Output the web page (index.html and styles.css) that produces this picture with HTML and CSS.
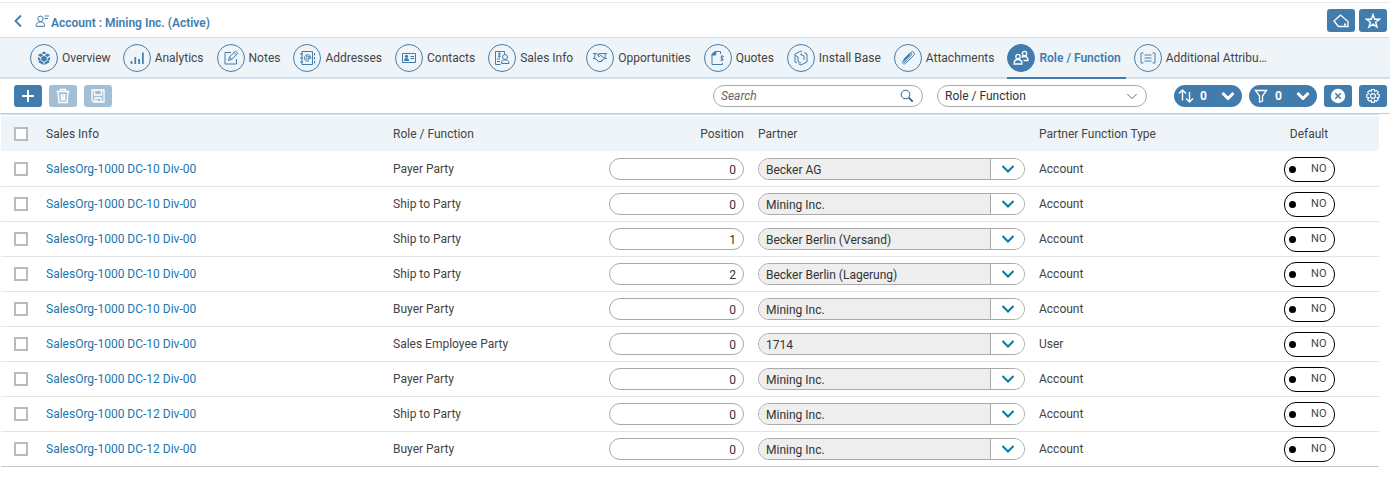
FILE: index.html
```
<!DOCTYPE html>
<html lang="en">
<head>
<meta charset="utf-8">
<title>Account : Mining Inc.</title>
<link rel="stylesheet" href="styles.css">
</head>
<body>
<svg class="sprite" aria-hidden="true">
  <symbol id="chevron" viewBox="0 0 14 8"><path d="M1.500 1l5.500 5.500L12.500 1"/></symbol>
</svg>

<header class="header">
  <button class="back" aria-label="Back"><svg viewBox="0 0 8 14" width="8" height="14"><path d="M7 1.500L1.500 7 7 12.500" stroke-width="1.800"/></svg></button>
  <svg class="account-icon" viewBox="0 0 14 12" width="14" height="12"><circle cx="5.500" cy="3.800" r="2.700"/><path d="M1 11.300c0-3 1.500-4.300 4.500-4.300s4 1.300 4 4.300zM9.500 1H14M9.500 3.500H13"/></svg>
  <h1 class="title">Account : Mining Inc. (Active)</h1>
  <div class="header-actions">
    <button class="btn btn-tall" aria-label="Tag"><svg viewBox="0 0 16 16" width="16" height="16"><path d="M7.500 2L1 8l4.500 5.500H15V8.500z" stroke-width="1.300"/><path d="M11 10.500h2v2h-2z" fill="currentColor" stroke="none"/></svg></button>
    <button class="btn btn-tall" aria-label="Favorite"><svg viewBox="0 0 16 16" width="16" height="16"><path d="M8 1.500l1.600 4.700h5l-4 3 1.500 4.800L8 11.200 3.900 14l1.500-4.800-4-3h5z" stroke-width="1.400"/></svg></button>
  </div>
</header>

<nav class="tabs">
  <a class="tab" href="#"><span class="disc"><svg viewBox="0 0 16 16"><path d="M8 1.500l2.500 1.400L8 4.300 5.500 2.900zM4.500 3.500L7 4.900v.6L4.500 6.900 2.300 5.600v-.8zM11.500 3.500l2.200 1.300v.8l-2.200 1.300L9 5.500v-.6zM8 5.800l2.700 1.500v3L8 11.800l-2.700-1.500v-3zM2 7l2.400 1.400v2.500L2 9.700zM14 7v2.700l-2.400 1.200V8.400zM2.600 11l2.200-.2 2.700 1.600V15L2.600 12.200zM13.400 11l-2.200-.2-2.700 1.600V15l4.900-2.800z" fill="currentColor" stroke="none"/></svg></span>Overview</a>
  <a class="tab" href="#"><span class="disc"><svg viewBox="0 0 16 16"><path d="M2.500 14v-3M6.300 14V7M10.100 14V9M13.900 14V2.500" stroke-width="1.700"/></svg></span>Analytics</a>
  <a class="tab" href="#"><span class="disc"><svg viewBox="0 0 16 16"><path d="M8 2.500H2v11.500h11.500V9M5.500 10.500l1-3.500L12.500 1l2.300 2.300-6 6zM6.500 7l2.300 2.300M11 2.500l2.300 2.300"/></svg></span>Notes</a>
  <a class="tab" href="#"><span class="disc"><svg viewBox="0 0 16 16"><path d="M3 1.500h10.500v13H3zM1 4h3M1 8h3M1 12h3M15.500 3v2.500M15.500 7v2.500M15.500 11v2.500"/><circle cx="8.600" cy="7.800" r="1.500"/><path d="M10.200 6v2.300c0 1 1.600.8 1.600-.6A3.200 3.200 0 1 0 10 10.800"/></svg></span>Addresses</a>
  <a class="tab" href="#"><span class="disc"><svg viewBox="0 0 16 16"><path d="M1.500 3.500h13v9h-13zM9.500 6.500H13M9.500 8.500H13"/><circle cx="5.500" cy="6.300" r="1.600" fill="currentColor" stroke="none"/><path d="M3 11c0-2 1-2.900 2.500-2.900S8 9 8 11z" fill="currentColor" stroke="none"/></svg></span>Contacts</a>
  <a class="tab" href="#"><span class="disc"><svg viewBox="0 0 16 16"><path d="M6.500 14.500H1.500v-13h9V4M3 9h3M3 11.500h3M6.600 3.500c-2-.7-2.900 1-1.100 1.700s.8 2.200-1.500 1.400M5.300 2.500v5"/><circle cx="11" cy="7" r="2.500"/><path d="M7.500 13.500c0-3 1.200-3.700 3.500-3.700s4 .7 4 3.700z"/></svg></span>Sales Info</a>
  <a class="tab" href="#"><span class="disc"><svg viewBox="0 0 16 16"><path d="M1 3.500h3.500L6 4.500 8 3.500l3 .2 1.500-.2H15M1 8.500h2L7 12l2-.8 3.500-2.700H15M3.500 3.500L2.500 6 3 8.500M12.500 3.500l1 2.500-1 2.500M8 3.500L5.700 6c1 1 2 .5 3-.7L12.500 8.500M6 11L4 9M8 11.500l3-1"/></svg></span>Opportunities</a>
  <a class="tab" href="#"><span class="disc"><svg viewBox="0 0 16 16"><path d="M10.500 4V1.500H5L2 4.500v10h10.500V13"/><path d="M2 5V4.500l3-3h.8V5z" fill="currentColor"/><path d="M13.600 6.500c-2.800-1-3.600 1.200-1.600 1.800s1.200 2.700-1.600 1.700M12 5v6.300"/></svg></span>Quotes</a>
  <a class="tab" href="#"><span class="disc"><svg viewBox="0 0 16 16"><path d="M9 1.500L8 1 2 4v8l2 1M5.500 13.700L8 15l6-3V4l-3-1.500M5 7v4.500l3 1.500M5 7L2.500 5.500M7.500 4.500L11 6v4M9 3.500l-1.500 1"/></svg></span>Install Base</a>
  <a class="tab" href="#"><span class="disc"><svg viewBox="0 0 16 16"><path d="M5 12L11.500 5c1-1.200-.3-2.200-1.300-1.200L3 11c-1.500 2 .7 4 2.500 2.400L13.700 5.500c2-2.500-.8-5-3-3L3.500 9.300M5 12c-1 .7-1.700-.1-1-1l6-6"/></svg></span>Attachments</a>
  <a class="tab tab-active" href="#" aria-current="page"><span class="disc"><svg viewBox="0 0 16 16" stroke-width="1.300"><circle cx="5" cy="6.500" r="2.200"/><path d="M1 14c0-3.500 1.500-4.500 4-4.500s4 1 4 4.500z"/><circle cx="11.500" cy="3.500" r="2.200"/><path d="M8.500 7.500c.7-.7 1.500-1 3-1 2.500 0 3.500 1.300 3.500 4h-4.500"/></svg></span>Role / Function</a>
  <a class="tab" href="#"><span class="disc"><svg viewBox="0 0 16 16"><path d="M3.500 3H1v10h2.500M12.500 3H15v10h-2.500M4.500 5h7M4.500 8h7M4.500 11h7"/></svg></span>Additional Attribu…</a>
</nav>

<div class="toolbar">
  <button class="btn" aria-label="Add"><svg viewBox="0 0 16 16" width="16" height="16"><path d="M8 2v12M2 8h12" stroke-width="2"/></svg></button>
  <button class="btn" disabled aria-label="Delete"><svg viewBox="0 0 16 16" width="16" height="16"><path d="M1.500 3.500h13M5.500 3V1.500h5V3M3 4l1 10.500h8L13 4M6.200 6l.4 6.500M9.800 6l-.4 6.500M8 6v6.500" stroke-width="1.400"/></svg></button>
  <button class="btn" disabled aria-label="Save"><svg viewBox="0 0 16 16" width="16" height="16"><path d="M2 2h12v12H4l-2-2zM4.500 2v5h7V2M5 14v-4h6v4M7 11.500V14" stroke-width="1.300"/></svg></button>
  <label class="field search">
    <input type="search" placeholder="Search" aria-label="Search">
    <svg viewBox="0 0 14 14" width="14" height="14"><circle cx="5.500" cy="5.500" r="4.300"/><path d="M8.700 8.700l4 4" stroke-width="1.800"/></svg>
  </label>
  <label class="field picker">
    <select aria-label="Search column"><option>Role / Function</option></select>
    <svg width="12" height="7"><use href="#chevron"/></svg>
  </label>
  <div class="tools">
    <button class="btn pill" aria-label="Sort"><svg viewBox="0 0 16 16" width="16" height="16"><path d="M4.500 12.500V2M1 5.500L4.500 2 8 5.500M11.500 4v10M8 10.500l3.500 3.500 3.500-3.500" stroke-width="1.400"/></svg><b>0</b><svg class="thick" width="14" height="8"><use href="#chevron"/></svg></button>
    <button class="btn pill" aria-label="Filter"><svg viewBox="0 0 16 16" width="16" height="16"><path d="M2.500 2.500h11L9.500 8v5l-3 1V8z" stroke-width="1.300"/></svg><b>0</b><svg class="thick" width="14" height="8"><use href="#chevron"/></svg></button>
    <button class="btn" aria-label="Clear"><svg viewBox="0 0 16 16" width="16" height="16"><circle cx="8" cy="8" r="7.200" fill="currentColor" stroke="none"/><path d="M5.300 5.300l5.400 5.400M10.700 5.300l-5.400 5.400" stroke="#427cac" stroke-width="1.600"/></svg></button>
    <button class="btn" aria-label="Settings"><svg viewBox="0 0 16 16" width="16" height="16"><circle cx="8" cy="8" r="2.400" stroke-width="1.200"/><path d="M6.700 1.500h2.600l.4 1.900 1.700-1 1.900 1.900-1.100 1.600 2 .5v2.900l-2 .4 1.100 1.700-1.900 1.900-1.700-1.100-.4 2.100H6.700l-.4-2.100-1.700 1.100-1.900-1.900 1.100-1.700-2-.4V6.400l2-.5-1.100-1.600 1.900-1.900 1.700 1z" stroke-width="1.200"/></svg></button>
  </div>
</div>

<main class="content">
  <table class="grid">
    <colgroup><col class="c-check"><col><col class="c-role"><col class="c-position"><col class="c-partner"><col class="c-type"><col class="c-default"></colgroup>
    <thead>
      <tr><th><input class="check" type="checkbox" aria-label="Select all"></th><th>Sales Info</th><th>Role / Function</th><th class="num">Position</th><th>Partner</th><th>Partner Function Type</th><th class="mid">Default</th></tr>
    </thead>
    <tbody id="rows"></tbody>
  </table>
</main>
<script src="app.js"></script>
</body>
</html>
```
FILE: styles.css
```
:root {
  --blue: #427cac;
  --pale: #eff4f8;
  --edge: #aaa;
}
* { box-sizing: border-box; }
body {
  margin: 0;
  padding-top: 2px;
  font: 12px/16px Roboto, "Liberation Sans", sans-serif;
  color: #444;
  background: #fff;
}
button, input, select { font: inherit; color: inherit; margin: 0; }
svg { fill: none; stroke: currentColor; flex: none; display: block; }
.sprite { position: absolute; width: 0; height: 0; }

.header {
  display: flex;
  align-items: center;
  height: 35px;
  padding: 2px 3px 0 14px;
  border-top: 1px solid #eaeaea;
  color: var(--blue);
}
.back { display: flex; padding: 0; border: 0; background: none; color: var(--blue); }
.account-icon { margin-left: 13px; }
.title { margin: 3px 0 0 2px; font-size: 12px; font-weight: 600; }
.header-actions { display: flex; align-self: flex-start; gap: 4px; margin: 4px 0 0 auto; }

.btn {
  display: flex;
  align-items: center;
  justify-content: center;
  width: 28px;
  height: 22px;
  padding: 0;
  border: 0;
  border-radius: 3px;
  background: var(--blue);
  color: #fff;
}
.btn:disabled { background: #a3bfd6; color: #fff; }
.btn-tall { height: 23px; }
.pill { width: 68px; padding: 0 7px 0 4px; border-radius: 11px; justify-content: flex-start; }
.pill b { margin: 0 auto 0 6px; }
.thick { stroke-width: 2; }
.pill .thick { stroke-width: 3; }

.tabs {
  display: flex;
  gap: 8px;
  height: 42px;
  padding-left: 30px;
  background: var(--pale);
  border-top: 1px solid #d3e1ed;
  box-shadow: inset 0 -2px #d3e1ed;
}
.tab {
  display: flex;
  align-items: center;
  gap: 4px;
  padding-right: 4px;
  border-bottom: 2px solid transparent;
  color: inherit;
  text-decoration: none;
  white-space: nowrap;
}
.tab + .tab { padding-right: 5px; }
.disc {
  display: grid;
  place-items: center;
  width: 28px;
  height: 28px;
  border: 1px solid var(--blue);
  border-radius: 50%;
  color: var(--blue);
}
.disc svg { width: 16px; height: 16px; }
.tab-active { border-color: var(--blue); color: var(--blue); font-weight: 600; }
.tab-active .disc { background: var(--blue); color: #fff; }

.toolbar {
  display: flex;
  align-items: center;
  gap: 7px;
  height: 35px;
  padding: 0 3px 0 14px;
  border-bottom: 1px solid #ccc;
}
.field {
  display: flex;
  align-items: center;
  width: 210px;
  height: 22px;
  padding: 0 8px 0 7px;
  border: 1px solid var(--edge);
  border-radius: 11px;
}
.field input, .field select {
  flex: 1;
  min-width: 0;
  padding: 0;
  border: 0;
  outline: 0;
  background: none;
  appearance: none;
}
.field svg { color: #2c5f8c; }
.search { margin-left: auto; }
.search input::placeholder { color: #666; font-style: italic; }
.picker { margin: 0 20px 0 7px; color: #333; }
.tools { display: flex; gap: 7px; }

.content { padding: 0 11px 0 1px; }
.grid {
  width: 100%;
  border-collapse: separate;
  border-spacing: 0;
  table-layout: fixed;
  border-top: 1px solid #cfe0ee;
  border-bottom: 1px solid #c8c8c8;
}
.c-check { width: 38px; }
.c-role { width: 216px; }
.c-position { width: 149px; }
.c-partner { width: 281px; }
.c-type { width: 207px; }
.c-default { width: 140px; }
th, td { height: 35px; padding: 0 7px; text-align: left; font-weight: 400; border-bottom: 1px solid #e3e3e3; }
th { height: 37px; background: var(--pale) padding-box; border-top: 1px solid #fff; border-bottom-color: #fff; }
td { line-height: 18px; }
tbody tr:last-child td { height: 34px; border-bottom: 0; }
th:first-child, td:first-child { padding: 0 0 0 13px; }
.num { text-align: right; }
.mid { text-align: center; }
.grid a { color: #1a76ae; text-decoration: none; }

.check {
  display: block;
  appearance: none;
  width: 14px;
  height: 14px;
  border: 2px solid #bbb;
  background: #fff;
}
.position {
  display: block;
  width: 100%;
  height: 22px;
  padding: 1px 7px 0;
  border: 1px solid var(--edge);
  border-radius: 11px;
  color: #333;
  text-align: right;
}
.combo {
  display: flex;
  height: 22px;
  border: 1px solid var(--edge);
  border-radius: 11px;
  overflow: hidden;
}
.combo input { flex: 1; min-width: 0; padding: 1px 7px 0; border: 0; background: #eee; color: #333; }
.combo button {
  display: grid;
  place-items: center;
  width: 34px;
  padding: 0;
  border: 0;
  border-left: 1px solid var(--edge);
  background: #fff;
  color: #007ca6;
}
.toggle {
  display: flex;
  align-items: center;
  justify-content: space-between;
  width: 51px;
  height: 25px;
  margin: 0 auto;
  padding: 0 7px 0 4px;
  border: 1px solid #000;
  border-radius: 12px;
  font-size: 11px;
}
.toggle input { appearance: none; width: 7px; height: 7px; border-radius: 50%; background: #000; }
```
FILE: app.js
```
const rows = [
  ["10", "Payer Party", 0, "Becker AG", "Account"],
  ["10", "Ship to Party", 0, "Mining Inc.", "Account"],
  ["10", "Ship to Party", 1, "Becker Berlin (Versand)", "Account"],
  ["10", "Ship to Party", 2, "Becker Berlin (Lagerung)", "Account"],
  ["10", "Buyer Party", 0, "Mining Inc.", "Account"],
  ["10", "Sales Employee Party", 0, "1714", "User"],
  ["12", "Payer Party", 0, "Mining Inc.", "Account"],
  ["12", "Ship to Party", 0, "Mining Inc.", "Account"],
  ["12", "Buyer Party", 0, "Mining Inc.", "Account"]
];

document.getElementById("rows").innerHTML = rows.map(([channel, role, position, partner, type]) => `
  <tr>
    <td><input class="check" type="checkbox" aria-label="Select row"></td>
    <td><a href="#">SalesOrg-1000 DC-${channel} Div-00</a></td>
    <td>${role}</td>
    <td><input class="position" type="text" value="${position}" aria-label="Position"></td>
    <td><div class="combo"><input type="text" value="${partner}" readonly aria-label="Partner"><button aria-label="Choose partner"><svg class="thick" width="14" height="8"><use href="#chevron"/></svg></button></div></td>
    <td>${type}</td>
    <td><label class="toggle"><input type="checkbox" role="switch">NO</label></td>
  </tr>`).join("");
```
